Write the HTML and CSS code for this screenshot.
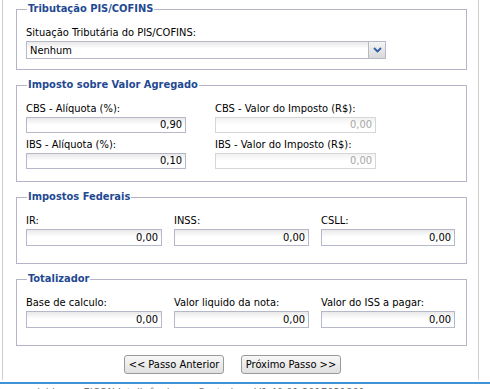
FILE: index.html
```html
<!DOCTYPE html>
<html lang="pt-BR">
<head>
<meta charset="utf-8">
<title>Tributação</title>
<link rel="stylesheet" href="styles.css">
</head>
<body>
<div class="page">
  <fieldset class="box box-pis">
    <legend>Tributação PIS/COFINS</legend>
    <label class="lbl">Situação Tributária do PIS/COFINS:</label>
    <div class="select">
      <span class="select-text">Nenhum</span>
      <span class="select-btn">
        <svg width="9" height="6" viewBox="0 0 9 6"><path d="M1 1 L4.5 4.5 L8 1" fill="none" stroke="#2d5fa8" stroke-width="1.8"/></svg>
      </span>
    </div>
  </fieldset>

  <fieldset class="box box-iva">
    <legend>Imposto sobre Valor Agregado</legend>
    <div class="grid2">
      <div class="field"><label class="lbl">CBS - Alíquota (%):</label><div class="inp">0,90</div></div>
      <div class="field"><label class="lbl">CBS - Valor do Imposto (R$):</label><div class="inp dis">0,00</div></div>
      <div class="field"><label class="lbl">IBS - Alíquota (%):</label><div class="inp">0,10</div></div>
      <div class="field"><label class="lbl">IBS - Valor do Imposto (R$):</label><div class="inp dis">0,00</div></div>
    </div>
  </fieldset>

  <fieldset class="box box-3">
    <legend>Impostos Federais</legend>
    <div class="grid3">
      <div class="field"><label class="lbl">IR:</label><div class="inp">0,00</div></div>
      <div class="field"><label class="lbl">INSS:</label><div class="inp">0,00</div></div>
      <div class="field"><label class="lbl">CSLL:</label><div class="inp">0,00</div></div>
    </div>
  </fieldset>

  <fieldset class="box box-3">
    <legend>Totalizador</legend>
    <div class="grid3">
      <div class="field"><label class="lbl">Base de calculo:</label><div class="inp">0,00</div></div>
      <div class="field"><label class="lbl">Valor liquido da nota:</label><div class="inp">0,00</div></div>
      <div class="field"><label class="lbl">Valor do ISS a pagar:</label><div class="inp">0,00</div></div>
    </div>
  </fieldset>

  <div class="actions">
    <button class="btn">&lt;&lt; Passo Anterior</button>
    <button class="btn">Próximo Passo &gt;&gt;</button>
  </div>
</div>
<div class="footer">Desenvolvido por EICON Inteligência em Controles - V1.40.01.2017031801</div>
</body>
</html>
```

FILE: styles.css
```css
html, body {
  margin: 0;
  padding: 0;
  background: #fff;
  overflow: hidden;
}
body {
  font-family: "DejaVu Sans Condensed", "DejaVu Sans", sans-serif;
  font-stretch: condensed;
  font-size: 11px;
  color: #000;
  width: 490px;
  height: 389px;
}
.page {
  margin-left: 2px;
  width: 477px;
  height: 380px;
  border-left: 1px solid #cfcfcf;
  border-right: 1px solid #cfcfcf;
  box-sizing: border-box;
  padding-top: 2px;
  padding-left: 13px;
}
.box {
  margin: 0 0 8px 0;
  width: 451px;
  box-sizing: border-box;
  border: 1px solid #b4b4c8;
  padding: 10px 9px 10px 9px;
  min-width: 0;
}
.box legend {
  font-weight: bold;
  color: #1f4a92;
  padding: 0 1px 0 1px;
  margin-left: 1px;
  line-height: 14px;
}
.lbl {
  display: block;
  line-height: 13px;
  height: 13px;
  margin-bottom: 2px;
  white-space: nowrap;
}
.select {
  width: 360px;
  height: 18px;
  box-sizing: border-box;
  border: 1px solid #b5b8c8;
  background: linear-gradient(to bottom, #e9e9e9 0, #ffffff 7px);
  display: flex;
  align-items: center;
  justify-content: space-between;
}
.select-text {
  padding-left: 3px;
}
.select-btn {
  width: 16px;
  height: 16px;
  border-left: 1px solid #b5b8c8;
  background: linear-gradient(to bottom, #f4f4f4, #d9d9d9);
  display: flex;
  align-items: center;
  justify-content: center;
}
.inp {
  height: 17px;
  box-sizing: border-box;
  border: 1px solid #b5b8c8;
  background: linear-gradient(to bottom, #e9e9e9 0, #ffffff 7px);
  text-align: right;
  padding-right: 3px;
  line-height: 15px;
}
.box-iva .inp {
  height: 16px;
  line-height: 14px;
}
.inp.dis {
  border-color: #d6d6d6;
  color: #a8a8a8;
  background: linear-gradient(to bottom, #f1f1f1 0, #ffffff 7px);
}
.grid2 {
  display: grid;
  grid-template-columns: 160px 161px;
  column-gap: 29px;
  row-gap: 5px;
}
.grid3 {
  display: grid;
  grid-template-columns: 136px 135px 134px;
  column-gap: 12px;
}
.box-3 {
  padding-bottom: 17px;
}
.box-iva {
  padding-bottom: 12px;
}
.actions {
  display: flex;
  justify-content: flex-start;
  gap: 17px;
  padding-left: 108px;
  margin-top: 9px;
}
.btn {
  font-family: inherit;
  font-stretch: condensed;
  font-size: 11px;
  color: #000;
  width: 100px;
  height: 19px;
  padding: 0;
  border: 1px solid #9a9a9a;
  border-radius: 3px;
  background: linear-gradient(to bottom, #f7f7f7, #e0e0e0);
}
.footer {
  border-top: 2px solid #3f93d6;
  margin-top: 2px;
  padding-top: 1px;
  margin-left: -6px;
  color: #707070;
  white-space: nowrap;
  line-height: 15px;
}
```
